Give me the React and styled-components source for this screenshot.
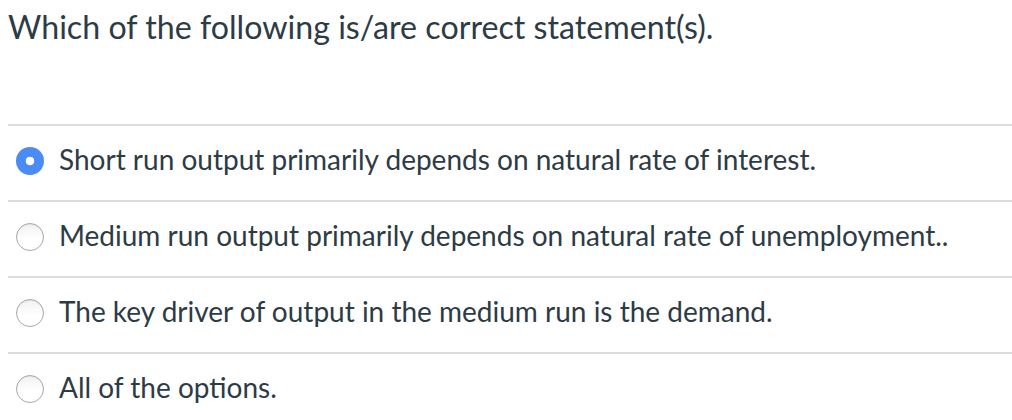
import styled, { createGlobalStyle } from "styled-components";

const GlobalStyle = createGlobalStyle`
  body {
    margin: 0;
    background: #ffffff;
    font-family: "Lato", "Liberation Sans", sans-serif;
    color: #2d3b45;
  }
`;

const options = [
  { text: "Short run output primarily depends on natural rate of interest.", checked: true },
  { text: "Medium run output primarily depends on natural rate of unemployment..", checked: false },
  { text: "The key driver of output in the medium run is the demand.", checked: false },
  { text: "All of the options.", checked: false },
];

function App() {
  return (
    <>
      <GlobalStyle />
      <Question>
        <QuestionText>Which of the following is/are correct statement(s).</QuestionText>
        <AnswerList>
          {options.map((opt) => (
            <AnswerRow key={opt.text}>
              <Radio $checked={opt.checked} />
              <AnswerLabel>{opt.text}</AnswerLabel>
            </AnswerRow>
          ))}
        </AnswerList>
      </Question>
    </>
  );
}

export default App;

const Question = styled.div`
  padding-left: 8px;
`;

const QuestionText = styled.p`
  margin: 0;
  padding-top: 7px;
  font-size: 32.2px;
  line-height: 40px;
  height: 117px;
  color: #2d3b45;
`;

const AnswerList = styled.div`
  display: flex;
  flex-direction: column;
`;

const AnswerRow = styled.div`
  display: flex;
  align-items: center;
  height: 66px;
  padding-bottom: 8px;
  border-top: 2px solid #dcdcdc;
  box-sizing: content-box;
  gap: 15px;
`;

const Radio = styled.span`
  display: inline-block;
  box-sizing: border-box;
  width: 28px;
  height: 28px;
  margin-left: 8px;
  margin-top: 4px;
  border-radius: 50%;
  flex-shrink: 0;
  ${({ $checked }) =>
    $checked
      ? `
    background: radial-gradient(circle, #ffffff 0 4px, #4b8bf4 4.6px);
  `
      : `
    background: linear-gradient(#f2f2f2, #ffffff 60%);
    border: 1.5px solid #a8a8a8;
    box-shadow: inset 0 1px 1px rgba(0, 0, 0, 0.08);
  `}
`;

const AnswerLabel = styled.span`
  font-size: 28px;
  color: #2d3b45;
`;
